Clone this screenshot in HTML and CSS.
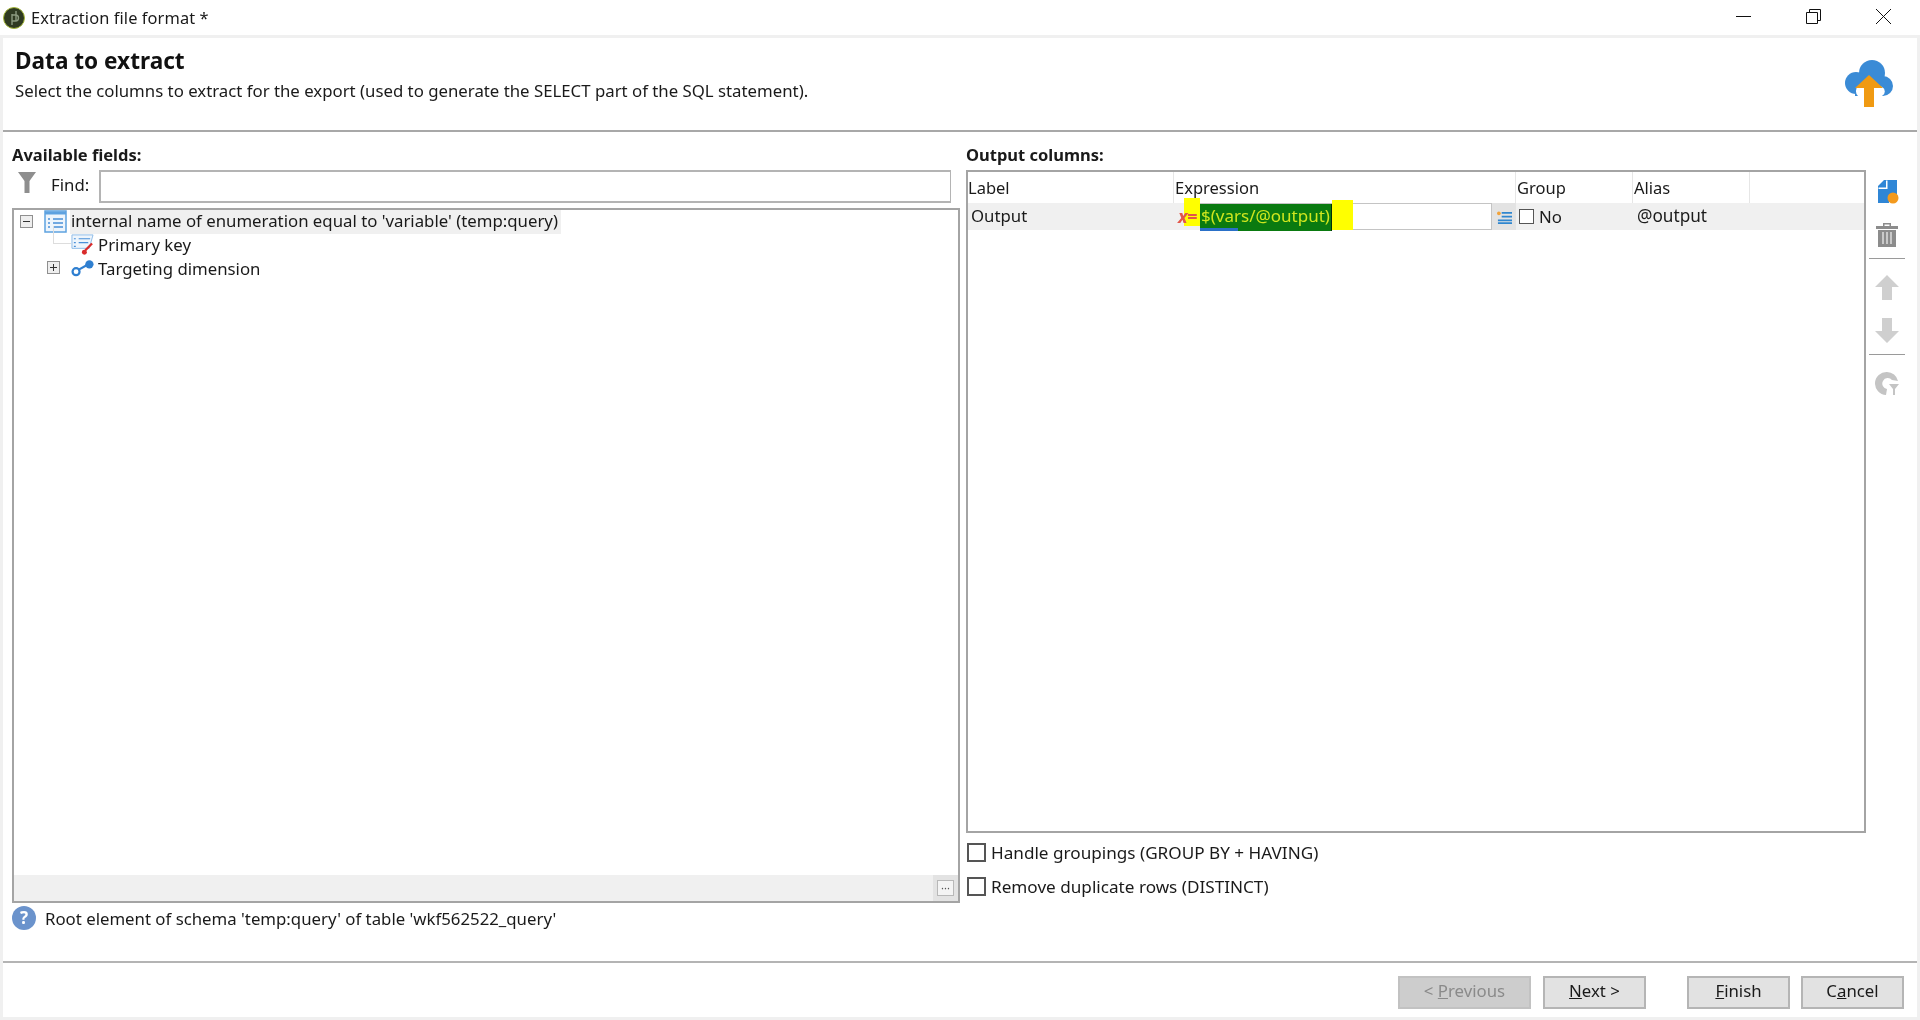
FILE: index.html
```html
<!DOCTYPE html>
<html lang="en">
<head>
<meta charset="utf-8">
<title>Extraction file format</title>
<link rel="stylesheet" href="styles.css">
</head>
<body>
<div class="app">
  <div class="titlebar">
    <svg class="app-icon" viewBox="0 0 22 22"><circle cx="11" cy="11" r="10.5" fill="#2f3a22" stroke="#a5b83a"/><path d="M9 7v11M9 8h3.500a2.700 2.700 0 0 1 0 6H9M13 4v10" fill="none" stroke="#8c9a80" stroke-width="1.4"/></svg>
    <span class="title-text">Extraction file format *</span>
    <div class="win-controls">
      <svg class="win-ctl" viewBox="0 0 15 15"><path d="M0 7.500h15" stroke="#111" fill="none"/></svg>
      <svg class="win-ctl" viewBox="0 0 15 15"><path d="M.5 3.500h11v11H.5zM3.500 3.500v-3h11v11h-3" stroke="#111" fill="none"/></svg>
      <svg class="win-ctl" viewBox="0 0 15 15"><path d="M0 0l15 15M15 0L0 15" stroke="#111" fill="none"/></svg>
    </div>
  </div>
  <div class="window">
    <header class="head">
      <div class="head-text">
        <h1>Data to extract</h1>
        <p>Select the columns to extract for the export (used to generate the SELECT part of the SQL statement).</p>
      </div>
      <svg class="cloud" viewBox="0 0 48 48">
        <g fill="#3a8bd6"><circle cx="27" cy="13" r="13"/><circle cx="11" cy="23" r="11"/><circle cx="38" cy="26" r="10"/><rect x="10" y="18" width="28" height="18"/></g>
        <path d="M13 36a7 7 0 0 1 0-10q2-1 4-1l7-8 7 8q3 0 6 2a5 5 0 0 1 0 9z" fill="#fff"/>
        <path d="M24 15L38 28h-9v19H19V28h-9z" fill="#f09a12"/>
      </svg>
    </header>
    <main class="main">
      <section class="left">
        <div class="group-label">Available fields:</div>
        <div class="find-row">
          <svg class="filter" viewBox="0 0 18 21"><path d="M0 0h18l-6.500 9v12h-5V9z" fill="#8e8e8e"/></svg>
          <label class="find-label">Find:</label>
          <div class="find-input"></div>
        </div>
        <div class="tree">
          <div class="tree-body">
            <div class="tree-row root">
              <span class="expander"><span class="minus"></span></span>
              <svg class="t-icon" viewBox="0 0 23 23"><rect x="1" y="1" width="21" height="21" fill="#eef5fc" stroke="#5ea2e0" stroke-width="1.500"/><path d="M1 3h21" stroke="#5ea2e0" stroke-width="3"/><path d="M9 9h10M9 13h10M9 17h10M4 9h2M4 13h2M4 17h2" stroke="#4a90d8" stroke-width="1.500"/></svg>
              <span class="t-label hl">internal name of enumeration equal to 'variable' (temp:query)</span>
            </div>
            <div class="tree-row child">
              <span class="tree-line"></span>
              <svg class="t-icon" viewBox="0 0 24 22"><path d="M1 1h22l-4 14H1z" fill="#eef5fc" stroke="#8dbbe8"/><path d="M8 5h12M8 9h10M3 5h2M3 9h2M3 13h2" stroke="#4a90d8" stroke-width="1.300"/><circle cx="14" cy="19" r="2.600" fill="#d92b2b"/><path d="M15 17l7-7" stroke="#d92b2b" stroke-width="2.400"/></svg>
              <span class="t-label">Primary key</span>
            </div>
            <div class="tree-row child">
              <span class="expander plus-pos"><span class="minus"></span><span class="plus"></span></span>
              <svg class="t-icon" viewBox="0 0 25 19"><circle cx="5.500" cy="13" r="3.800" fill="none" stroke="#2f7fd0" stroke-width="2.400"/><circle cx="20" cy="5" r="4.500" fill="#2f7fd0"/><path d="M8 11l9-5" stroke="#2f7fd0" stroke-width="2.400"/></svg>
              <span class="t-label">Targeting dimension</span>
            </div>
          </div>
          <div class="tree-foot">
            <span class="more-wrap"><span class="more">···</span></span>
          </div>
        </div>
        <div class="status">
          <span class="help">?</span>
          <span>Root element of schema 'temp:query' of table 'wkf562522_query'</span>
        </div>
      </section>
      <section class="right">
        <div class="group-label">Output columns:</div>
        <div class="right-body">
          <div class="table">
            <div class="cols thead">
              <div class="th">Label</div>
              <div class="th">Expression</div>
              <div class="th">Group</div>
              <div class="th">Alias</div>
              <div class="th th-end"></div>
            </div>
            <div class="cols trow">
              <div class="td td-label">Output</div>
              <div class="td td-expr">
                <span class="x-eq"><i>x</i>=</span>
                <span class="editor">
                  <span class="sel">$(vars/@output)</span>
                  <span class="mark"></span>
                </span>
                <span class="expr-btn">
                  <svg viewBox="0 0 16 14" class="expr-icon"><path d="M5 2.500h11M5 6.500h11M1 10.500h15M1 13.500h15" stroke="#2f86cf" stroke-width="1.800"/><circle cx="2" cy="3" r="2" fill="#f2a33a"/></svg>
                </span>
              </div>
              <div class="td td-group"><span class="box small"></span>No</div>
              <div class="td td-alias">@output</div>
              <div class="td"></div>
            </div>
          </div>
          <div class="toolbar">
            <svg class="tool" viewBox="0 0 24 25"><path d="M3 7l6-6h13v15a7 7 0 0 0-8 8H3z" fill="#2f86d6"/><path d="M3.500 8.500h7.500V1.500h1.500v8.500H3.500z" fill="#fff"/><circle cx="18" cy="19" r="5.500" fill="#f39a1e"/></svg>
            <svg class="tool" viewBox="0 0 24 25"><path d="M8 4V1h8v3h-1.500V2.500h-5V4zM1 4h22v3H1zM3 8h18v17H3z" fill="#8c8c8c"/><path d="M8 10v12M12 10v12M16 10v12" stroke="#ddd" stroke-width="1.500"/></svg>
            <span class="sep"></span>
            <svg class="tool" viewBox="0 0 24 25"><path d="M12 0l12 12h-7v13H7V12H0z" fill="#cfcfcf"/></svg>
            <svg class="tool" viewBox="0 0 24 25"><path d="M12 25L0 13h7V0h10v13h7z" fill="#cfcfcf"/></svg>
            <span class="sep"></span>
            <svg class="tool" viewBox="0 0 24 25"><path d="M12 1a11.500 11.500 0 0 0-1 23l1-6a5.500 5.500 0 1 1 5-9l6 1A11.500 11.500 0 0 0 12 1z" fill="#c4c4c4"/><path d="M14 13h10l-4 5v6h-2v-6z" fill="#c4c4c4"/></svg>
          </div>
        </div>
        <label class="check"><span class="box"></span>Handle groupings (GROUP BY + HAVING)</label>
        <label class="check"><span class="box"></span>Remove duplicate rows (DISTINCT)</label>
      </section>
    </main>
    <footer class="foot">
      <button class="btn disabled prev">&lt; <u>P</u>revious</button>
      <button class="btn next"><u>N</u>ext &gt;</button>
      <button class="btn"><u>F</u>inish</button>
      <button class="btn">C<u>a</u>ncel</button>
    </footer>
  </div>
</div>
</body>
</html>
```
FILE: styles.css
```css
* { box-sizing: border-box; }
html, body { margin: 0; padding: 0; }
body { width: 1920px; height: 1020px; overflow: hidden; background: #f0f0f0; color: #1a1a1a; font-family: "Noto Sans", "Open Sans", sans-serif; font-size: 16.8px; }
.app { display: flex; flex-direction: column; height: 1020px; filter: blur(.45px); }

.titlebar { height: 35px; background: #fff; display: flex; align-items: center; padding-left: 3px; flex: none; }
.app-icon { width: 22px; height: 22px; flex: none; }
.title-text { margin-left: 6px; font-size: 16.4px; letter-spacing: .1px; }
.win-controls { margin-left: auto; display: flex; padding-right: 29px; margin-top: -3px; }
.win-ctl { width: 15px; height: 15px; display: block; margin-left: 55px; }

.window { margin: 3px; flex: 1; background: #fff; display: flex; flex-direction: column; min-height: 0; }

.head { height: 94px; flex: none; border-bottom: 2px solid #a8a8a8; display: flex; justify-content: space-between; padding: 9px 24px 0 12px; }
.head h1 { margin: 0; font-size: 22.6px; line-height: 28px; font-weight: 700; color: #111; }
.head p { margin: 3px 0 0; line-height: 25px; }
.cloud { width: 48px; height: 48px; margin-top: 13px; }

.main { flex: 1; min-height: 0; display: grid; grid-template-columns: 948px 949px; gap: 6px; padding: 13px 0 0 9px; }
.left, .right { display: flex; flex-direction: column; min-height: 0; }
.group-label { height: 25px; line-height: 19px; font-weight: 700; font-size: 16.5px; flex: none; }

.find-row { height: 33px; display: flex; align-items: center; flex: none; }
.filter { width: 18px; height: 21px; margin: -8px 0 0 6px; flex: none; }
.find-label { margin-left: 15px; width: 48px; flex: none; padding-bottom: 4px; }
.find-input { width: 852px; height: 33px; border: 2px solid #b4b4b4; border-right-width: 1px; background: #fff; }

.tree { margin-top: 5px; height: 695px; border: 2px solid #a4a4a4; display: flex; flex-direction: column; flex: none; }
.tree-body { flex: 1; margin-top: -1px; }
.tree-row { height: 24px; display: flex; align-items: center; position: relative; }
.root { padding-left: 6px; height: 25px; margin-bottom: -2px; }
.child { padding-left: 57px; }
.expander { width: 13px; height: 13px; border: 1px solid #8f8f8f; background: #eee; position: relative; flex: none; }
.minus { position: absolute; left: 2px; right: 2px; top: 5px; height: 1px; background: #333; }
.plus { position: absolute; top: 2px; bottom: 2px; left: 5px; width: 1px; background: #333; }
.plus-pos { position: absolute; left: 33px; top: 5px; }
.tree-line { position: absolute; left: 39px; top: -6px; height: 18px; width: 18px; border-left: 1px solid #ddd; border-bottom: 1px solid #ddd; }
.t-icon { width: 23px; height: 23px; flex: none; }
.root .t-icon { margin-left: 11px; }
.t-label { margin-left: 4px; white-space: nowrap; }
.hl { background: #f0f0f0; margin-left: 3px; padding: 0 3px 0 1px; height: 24px; margin-top: 1px; line-height: 21px; }

.tree-foot { height: 26px; background: #f0f0f0; display: flex; justify-content: flex-end; flex: none; }
.more-wrap { width: 25px; background: #e3e3e3; display: flex; align-items: center; justify-content: center; }
.more { width: 17px; height: 16px; background: #f4f4f4; border: 1px solid #b8b8b8; font-size: 11px; line-height: 13px; text-align: center; color: #555; }

.status { display: flex; align-items: center; height: 24px; margin-top: 3px; flex: none; }
.help { width: 24px; height: 24px; border-radius: 50%; background: #6b93cc; color: #fff; font-weight: 700; text-align: center; line-height: 24px; font-size: 17px; flex: none; margin-right: 9px; }

.right-body { display: flex; height: 663px; flex: none; }
.table { width: 900px; height: 663px; border: 2px solid #a4a4a4; flex: none; }
.cols { display: grid; grid-template-columns: 206px 342px 117px 117px 1fr; }
.thead { height: 31px; }
.th { border-right: 1px solid #e6e6e6; padding: 4px 0 0 1px; line-height: 24px; font-size: 16.5px; }
.th:first-child { padding-left: 0; }
.th-end { border-right: 0; }
.trow { height: 27px; background: #f0f0f0; line-height: 25px; }
.td { white-space: nowrap; min-width: 0; }
.td-label { padding-left: 3px; }
.td-expr { display: flex; }
.x-eq { width: 26px; position: relative; z-index: 0; color: #e2564a; font-weight: 700; padding-left: 4px; font-size: 18px; line-height: 27px; white-space: nowrap; letter-spacing: -.5px; }
.x-eq::before { content: ""; position: absolute; z-index: -1; left: 10px; top: -5px; width: 16px; height: 28px; background: #ffff00; }
.editor { width: 292px; height: 27px; background: #fff; border: 1px solid #c4c4c4; border-left: 0; display: flex; }
.sel { width: 132px; height: 27px; background: linear-gradient(#2a70c8, #2a70c8) no-repeat 0 100% / 38px 3px, #0a7a10; color: #cfe61e; padding-left: 1px; line-height: 24px; font-size: 17px; flex: none; border-right: 1px solid #04300a; white-space: nowrap; }
.mark { width: 21px; height: 30px; margin-top: -4px; background: #ffff00; flex: none; }
.expr-btn { width: 24px; background: #e3e3e3; display: flex; align-items: center; justify-content: center; flex: none; }
.expr-icon { width: 15px; height: 14px; }
.td-group { display: flex; align-items: center; padding: 0 0 1px 3px; }
.td-alias { padding-left: 4px; font-size: 17.2px; }
.box { width: 19px; height: 19px; border: 2px solid #555; background: #fff; display: block; flex: none; }
.box.small { width: 15px; height: 15px; margin-right: 5px; border-width: 1px; }

.toolbar { width: 49px; display: flex; flex-direction: column; align-items: flex-start; padding: 9px 0 0 3px; flex: none; }
.tool { width: 24px; height: 25px; display: block; margin: 0 0 18px 6px; flex: none; }
.sep { width: 36px; height: 1px; background: #9a9a9a; margin: -7px 0 16px 0; flex: none; }

.right-body + .check { margin-top: 2px; }
.check { display: flex; align-items: center; height: 34px; gap: 5px; padding-left: 1px; font-size: 17.15px; }

.foot { height: 56px; flex: none; border-top: 2px solid #b4b4b4; display: flex; align-items: flex-start; padding: 13px 13px 0 0; justify-content: flex-end; }
.btn { width: 103px; height: 33px; border: 2px solid #b5b5b5; background: #e2e2e2; color: #1a1a1a; font: inherit; margin-left: 11px; padding: 0 0 5px; }
.btn u { text-decoration-thickness: 1px; }
.prev { width: 133px; }
.next { margin-left: 12px; margin-right: 30px; }
.disabled { background: #cdcdcd; color: #8a8a8a; border-color: #c2c2c2; }
```
